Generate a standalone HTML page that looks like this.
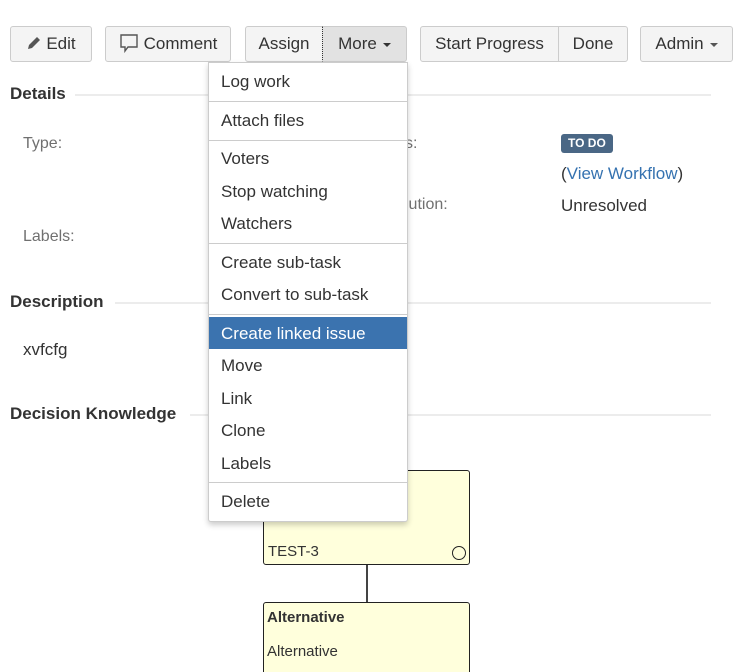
<!DOCTYPE html>
<html style="width:745px;height:672px;overflow:hidden"><head><style>
*{box-sizing:border-box;margin:0;padding:0}
body{width:745px;height:672px;overflow:hidden;background:#fff;font-family:"Liberation Sans",Arial,sans-serif;color:#333;position:relative}
.a{position:absolute;white-space:nowrap}
.btn{position:absolute;top:26px;height:36px;border:1px solid #ccc;border-radius:3px;background:#f4f4f4;font-size:17px;line-height:34px;text-align:center;color:#333}
.caret{display:inline-block;width:0;height:0;border-left:4px solid transparent;border-right:4px solid transparent;border-top:4px solid #333;vertical-align:middle;margin-left:6px}
.h{position:absolute;left:10px;font-weight:bold;font-size:17px}
.line{position:absolute;height:2px;background:#ececec}
.lbl{position:absolute;color:#707070;font-size:16px}
.menu{position:absolute;left:208px;top:62px;width:200px;height:460px;background:#fff;border:1px solid #ccc;border-radius:0 0 3px 3px;box-shadow:0 3px 6px rgba(0,0,0,.2)}
.mi{position:absolute;left:12px;font-size:17px;color:#333}
.sep{position:absolute;left:0;right:0;height:1px;background:#ccc}
.box{position:absolute;left:263px;width:207px;background:#ffffdc;border:1px solid #222;border-radius:3px;font-family:"Liberation Sans",sans-serif;font-size:15px;color:#333}
</style></head><body>
<div class="btn" style="left:10px;width:82px"><svg width="16" height="16" viewBox="0 0 16 16" style="vertical-align:-2px;margin-right:4px"><path d="M2 14l1-4 8-8 3 3-8 8z" fill="#555"/></svg>Edit</div>
<div class="btn" style="left:105px;width:126px"><svg width="20" height="20" viewBox="0 0 20 20" style="vertical-align:-4px;margin-right:5px"><path d="M2 2h16v12H9l-3 4v-4H2z" fill="none" stroke="#555" stroke-width="1.4"/></svg>Comment</div>
<div class="btn" style="left:245px;width:78px;border-radius:3px 0 0 3px">Assign</div>
<div class="btn" style="left:322px;width:85px;background:#e2e2e2;border-left:1px dotted #333;border-radius:0 3px 3px 0">More<span class="caret"></span></div>
<div class="btn" style="left:420px;width:139px;border-radius:3px 0 0 3px">Start Progress</div>
<div class="btn" style="left:558px;width:70px;border-radius:0 3px 3px 0">Done</div>
<div class="btn" style="left:640px;width:93px">Admin<span class="caret" style="border-top-color:#555"></span></div>

<div class="h" style="top:84px">Details</div><div class="line" style="left:75px;width:636px;top:94px"></div>
<div class="lbl" style="left:23px;top:135px">Type:</div>
<div class="lbl" style="left:23px;top:228px">Labels:</div>
<div class="lbl" style="left:405px;top:135px">s:</div>
<div class="lbl" style="left:405px;top:196px">lution:</div>
<div class="a" style="left:561px;top:134px;height:19px;padding:0 7px;background:#4a6785;color:#fff;font-weight:bold;font-size:12px;line-height:19px;border-radius:3px">TO DO</div>
<div class="a" style="left:561px;top:164px;font-size:17px;color:#333">(<span style="color:#3572b0">View Workflow</span>)</div>
<div class="a" style="left:561px;top:196px;font-size:17px">Unresolved</div>

<div class="h" style="top:292px">Description</div><div class="line" style="left:115px;width:596px;top:302px"></div>
<div class="a" style="left:23px;top:340px;font-size:17px">xvfcfg</div>
<div class="h" style="top:404px">Decision Knowledge</div><div class="line" style="left:190px;width:521px;top:414px"></div>

<div class="box" style="top:470px;height:95px"><div class="a" style="left:4px;top:72px">TEST-3</div><div class="a" style="left:188px;top:75px;width:14px;height:14px;border:1.5px solid #222;border-radius:50%"></div></div>
<div class="a" style="left:366px;top:565px;width:2px;height:37px;background:#444"></div>
<div class="box" style="top:602px;height:80px"><div class="a" style="left:3px;top:6px;font-weight:bold">Alternative</div><div class="a" style="left:3px;top:40px">Alternative</div></div>

<div class="menu">
<div class="mi" style="top:9px">Log work</div><div class="sep" style="top:38px"></div>
<div class="mi" style="top:48px">Attach files</div><div class="sep" style="top:77px"></div>
<div class="mi" style="top:86px">Voters</div>
<div class="mi" style="top:119px">Stop watching</div>
<div class="mi" style="top:151px">Watchers</div><div class="sep" style="top:180px"></div>
<div class="mi" style="top:190px">Create sub-task</div>
<div class="mi" style="top:222px">Convert to sub-task</div><div class="sep" style="top:251px"></div>
<div class="a" style="left:0;top:254px;width:198px;height:32px;background:#3b73af"></div>
<div class="mi" style="top:261px;color:#fff">Create linked issue</div>
<div class="mi" style="top:293px">Move</div>
<div class="mi" style="top:326px">Link</div>
<div class="mi" style="top:358px">Clone</div>
<div class="mi" style="top:391px">Labels</div><div class="sep" style="top:419px"></div>
<div class="mi" style="top:429px">Delete</div>
</div>
</body></html>
